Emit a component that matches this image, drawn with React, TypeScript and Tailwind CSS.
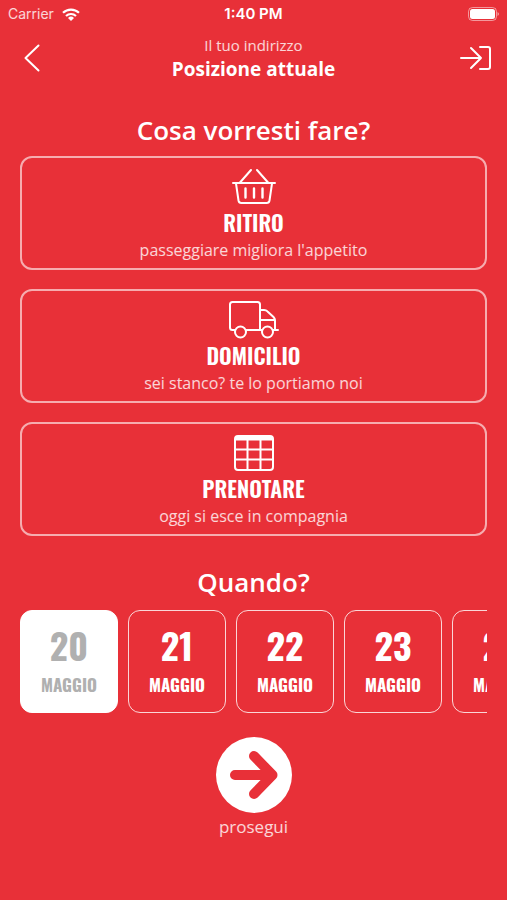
import React, { useState } from 'react';

interface Service {
  id: string;
  title: string;
  subtitle: string;
  icon: React.ReactNode;
}

const CONDENSED = "font-['Oswald','Liberation_Sans_Narrow','Liberation_Sans',sans-serif]";

const BasketIcon = () => (
  <svg width="46" height="38" viewBox="0 0 46 38" fill="none" stroke="currentColor" strokeWidth="2" strokeLinecap="round" strokeLinejoin="round">
    <path d="M2 15h42M9 14.500L20 2M37 14.500L26 2" />
    <path d="M5 15.500l2.500 17c.3 1.700 1.200 2.500 2.800 2.500h25.400c1.600 0 2.500-.8 2.800-2.500L41 15.500" />
    <path d="M14.500 20.500v9M23 20.500v9M31.500 20.500v9" strokeWidth="2.400" />
  </svg>
);

const TruckIcon = () => (
  <svg width="50" height="38" viewBox="0 0 50 38" fill="none" stroke="currentColor" strokeWidth="2" strokeLinecap="round" strokeLinejoin="round">
    <path d="M6 29H3.500C2 29 1 28 1 26.500v-23C1 2 2 1 3.500 1h25C30 1 31 2 31 3.500V29M17 29H33M44 29H49" />
    <path d="M31 9h4c1.500 0 2.500.4 3.500 1.400l6 5.600c1.200 1.200 1.500 2 1.500 3.500V29M31 19h15" />
    <circle cx="11.500" cy="31" r="5.500" />
    <circle cx="38.500" cy="31" r="5.500" />
  </svg>
);

const TableIcon = () => (
  <svg width="40" height="36" viewBox="0 0 40 36" fill="none" stroke="currentColor" strokeWidth="2">
    <rect x="1" y="1" width="38" height="34" rx="3" />
    <path d="M1 3.500h38" strokeWidth="4" />
    <path d="M1 14.500h38M1 24.500h38M13.500 3v32M26.500 3v32" />
  </svg>
);

const services: Service[] = [
  { id: 'ritiro', title: 'RITIRO', subtitle: "passeggiare migliora l'appetito", icon: <BasketIcon /> },
  { id: 'domicilio', title: 'DOMICILIO', subtitle: 'sei stanco? te lo portiamo noi', icon: <TruckIcon /> },
  { id: 'prenotare', title: 'PRENOTARE', subtitle: 'oggi si esce in compagnia', icon: <TableIcon /> },
];

const days = [20, 21, 22, 23, 24];

const StatusBar = () => (
  <div className="grid h-7 grid-cols-3 items-center px-2 font-['Inter',sans-serif] text-sm">
    <div className="flex items-center gap-2 text-white/80">
      <span>Carrier</span>
      <svg width="18" height="13" viewBox="0 0 18 13" fill="none" stroke="white" strokeWidth="2.200">
        <path d="M1 4.800a11.500 11.500 0 0 1 16 0M4 8a7.200 7.200 0 0 1 10 0" />
        <path d="M9 13L6 10a4.300 4.300 0 0 1 6 0z" fill="white" stroke="none" />
      </svg>
    </div>
    <span className="text-center text-[15px] font-semibold">1:40 PM</span>
    <svg className="justify-self-end" width="32" height="14" viewBox="0 0 32 14" fill="none">
      <rect x="1.500" y="0.500" width="28" height="13" rx="4" stroke="white" strokeOpacity="0.500" />
      <rect x="3" y="2" width="25" height="10" rx="2.500" fill="white" />
      <path d="M30.500 5v4c1-.5 1.500-1.200 1.500-2s-.5-1.500-1.500-2z" fill="white" fillOpacity="0.500" />
    </svg>
  </div>
);

const App: React.FC = () => {
  const [service, setService] = useState<string | null>(null);
  const [day, setDay] = useState(20);

  return (
    <div className="flex min-h-screen flex-col bg-[#e83038] font-['Open_Sans',sans-serif] text-white">
      <StatusBar />

      <header className="flex h-15 items-center justify-between px-4">
        <button aria-label="Indietro" className="flex w-8 justify-center">
          <svg width="16" height="28" viewBox="0 0 16 28" fill="none" stroke="currentColor" strokeWidth="2" strokeLinecap="round" strokeLinejoin="round">
            <path d="M14.500 1.500L1.500 14l13 12.500" />
          </svg>
        </button>
        <div className="pb-0.5 text-center">
          <p className="text-[15px] leading-6 text-white/80">Il tuo indirizzo</p>
          <h1 className="text-[19px] leading-6 font-bold">Posizione attuale</h1>
        </div>
        <button aria-label="Accedi" className="flex w-8 justify-center">
          <svg width="32" height="26" viewBox="0 0 32 26" fill="none" stroke="currentColor" strokeWidth="2" strokeLinecap="round" strokeLinejoin="round">
            <path d="M2 13h20M12 3l10 10-10 10" />
            <path d="M21 2h8c1.300 0 2 .7 2 2v18c0 1.300-.7 2-2 2h-8" />
          </svg>
        </button>
      </header>

      <main className="flex flex-col px-5 pt-6">
        <h2 className="text-center text-[26px] leading-9 font-semibold">Cosa vorresti fare?</h2>

        <div className="mt-2 flex flex-col gap-[19px]">
          {services.map(s => (
            <button
              key={s.id}
              onClick={() => setService(s.id)}
              aria-pressed={service === s.id}
              className="flex h-[114px] flex-col items-center rounded-xl border-2 border-white/60 pt-2"
            >
              <span className="flex h-[42px] items-center justify-center">{s.icon}</span>
              <span className={`${CONDENSED} text-[22px] leading-7 font-semibold`}>{s.title}</span>
              <span className="text-base leading-7 text-white/80">{s.subtitle}</span>
            </button>
          ))}
        </div>

        <h2 className="mt-7 text-center text-[26px] leading-9 font-semibold">Quando?</h2>

        <div className="mt-2.5 flex gap-2.5 overflow-hidden">
          {days.map(d => (
            <button
              key={d}
              onClick={() => setDay(d)}
              aria-pressed={day === d}
              className={`${CONDENSED} flex h-[103px] w-[98px] shrink-0 flex-col items-center rounded-xl border pt-1.5 font-bold ${
                day === d ? 'border-white bg-white text-[#b0b0b0]' : 'border-white/80'
              }`}
            >
              <span className="text-4xl leading-14">{d}</span>
              <span className="text-[17px] leading-6">MAGGIO</span>
            </button>
          ))}
        </div>

        <button className="mt-6 flex flex-col items-center self-center">
          <span className="flex size-[76px] items-center justify-center rounded-full bg-white text-[#e83038]">
            <svg width="50" height="50" viewBox="0 0 50 50" fill="none" stroke="currentColor" strokeWidth="10" strokeLinecap="round" strokeLinejoin="round">
              <path d="M6 25h36M25 6l18.500 19L25 44" />
            </svg>
          </span>
          <span className="text-[17px] leading-7 text-white/80">prosegui</span>
        </button>
      </main>
    </div>
  );
};

export default App;
